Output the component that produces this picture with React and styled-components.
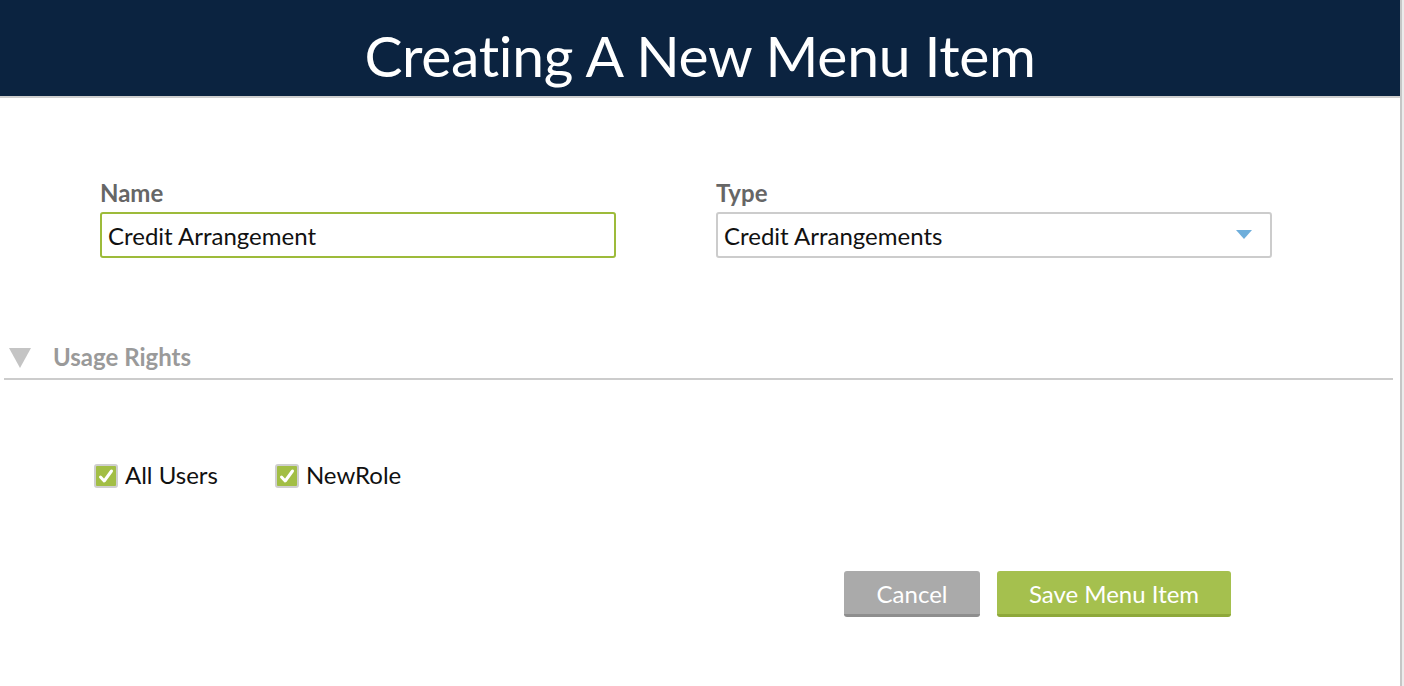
import React, { useState } from "react";
import styled, { createGlobalStyle } from "styled-components";

const GlobalStyle = createGlobalStyle`
  html, body {
    margin: 0;
    padding: 0;
    background: #ececec;
    font-family: Lato, "Open Sans", sans-serif;
  }
`;

const Page = styled.div`
  width: 1402px;
  height: 686px;
  background: #fff;
  border-right: 2px solid #c6c6c6;
  box-sizing: border-box;
  overflow: hidden;
`;

const Header = styled.header`
  height: 96px;
  background: #0b2340;
  border-bottom: 2px solid #cfcfcf;
  display: flex;
  align-items: center;
  justify-content: center;
`;

const Title = styled.h1`
  margin: 0;
  padding-top: 13px;
  color: #fff;
  font-weight: 400;
  font-size: 57px;
  letter-spacing: -0.3px;
`;

const FieldsRow = styled.div`
  display: grid;
  grid-template-columns: 516px 556px;
  column-gap: 100px;
  padding: 82px 0 0 100px;
`;

const Field = styled.div`
  display: flex;
  flex-direction: column;
  gap: 6px;
`;

const Label = styled.label`
  font-size: 24px;
  font-weight: 700;
  color: #666;
  line-height: 26px;
`;

const TextInput = styled.input`
  height: 46px;
  box-sizing: border-box;
  border: 2px solid ${(p) => (p.$active ? "#9dbb3a" : "#cccccc")};
  border-radius: 3px;
  padding: 0 6px;
  font-family: Lato, sans-serif;
  font-size: 24px;
  color: #111;
  outline: none;
`;

const Select = styled.div`
  height: 46px;
  box-sizing: border-box;
  border: 2px solid #cccccc;
  border-radius: 3px;
  padding: 0 18px 0 6px;
  display: flex;
  align-items: center;
  justify-content: space-between;
  font-size: 24px;
  color: #111;
`;

const Arrow = styled.span`
  width: 0;
  height: 0;
  border-left: 8px solid transparent;
  border-right: 8px solid transparent;
  border-top: 9px solid #6eaedb;
  margin-top: -2px;
`;

const SectionHeader = styled.div`
  margin: 78px 7px 0 4px;
  height: 44px;
  border-bottom: 2px solid #cccccc;
  display: flex;
  align-items: center;
  gap: 22px;
  padding-left: 5px;
  padding-bottom: 2px;
  box-sizing: border-box;
`;

const Caret = styled.span`
  width: 0;
  height: 0;
  border-left: 11px solid transparent;
  border-right: 11px solid transparent;
  border-top: 20px solid #c4c4c4;
  margin-top: 4px;
`;

const SectionTitle = styled.span`
  font-size: 24px;
  font-weight: 700;
  color: #9a9a9a;
`;

const Roles = styled.div`
  display: flex;
  gap: 57px;
  padding: 80px 0 0 94px;
`;

const CheckLabel = styled.label`
  display: flex;
  align-items: center;
  gap: 7px;
  font-size: 24px;
  color: #111;
`;

const Box = styled.span`
  width: 24px;
  height: 24px;
  box-sizing: border-box;
  border: 2px solid #cfcfcf;
  border-radius: 3px;
  background: #a2be45;
  display: flex;
  align-items: center;
  justify-content: center;
  margin-top: 3px;
`;

const Actions = styled.div`
  display: flex;
  justify-content: flex-end;
  gap: 17px;
  padding: 82px 169px 0 0;
`;

const Button = styled.button`
  height: 46px;
  box-sizing: border-box;
  border: none;
  border-radius: 3px;
  border-bottom: 3px solid ${(p) => (p.$primary ? "#8ea83a" : "#8e8e8e")};
  background: ${(p) => (p.$primary ? "#a5c04e" : "#aaaaaa")};
  color: #fff;
  font-family: Lato, sans-serif;
  font-size: 24px;
  padding: 2px 0 0;
  width: ${(p) => p.$width}px;
  cursor: pointer;
`;

const Check = () => (
  <svg width="16" height="16" viewBox="0 0 16 16">
    <path
      d="M2.5 9 L6.2 13 L13.5 3"
      fill="none"
      stroke="#fff"
      strokeWidth="3"
      strokeLinecap="round"
      strokeLinejoin="round"
    />
  </svg>
);

const RoleCheck = ({ label }) => (
  <CheckLabel>
    <Box>
      <Check />
    </Box>
    {label}
  </CheckLabel>
);

export default function App() {
  const [name, setName] = useState("Credit Arrangement");
  return (
    <Page>
      <GlobalStyle />
      <Header>
        <Title>Creating A New Menu Item</Title>
      </Header>
      <FieldsRow>
        <Field>
          <Label>Name</Label>
          <TextInput $active value={name} onChange={(e) => setName(e.target.value)} />
        </Field>
        <Field>
          <Label>Type</Label>
          <Select>
            Credit Arrangements
            <Arrow />
          </Select>
        </Field>
      </FieldsRow>
      <SectionHeader>
        <Caret />
        <SectionTitle>Usage Rights</SectionTitle>
      </SectionHeader>
      <Roles>
        <RoleCheck label="All Users" />
        <RoleCheck label="NewRole" />
      </Roles>
      <Actions>
        <Button $width={136}>Cancel</Button>
        <Button $primary $width={234}>Save Menu Item</Button>
      </Actions>
    </Page>
  );
}
